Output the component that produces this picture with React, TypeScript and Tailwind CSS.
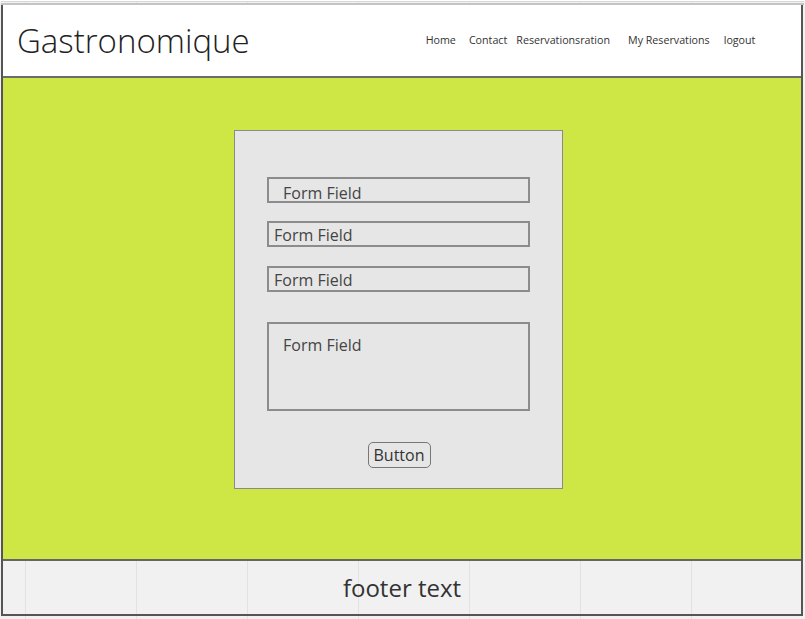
import React from 'react'

const navItems = [
  { label: 'Home', cls: 'ml-0' },
  { label: 'Contact', cls: 'ml-[13px]' },
  { label: 'Reservationsration', cls: 'ml-[9px]' },
  { label: 'My Reservations', cls: 'ml-[18px]' },
  { label: 'logout', cls: 'ml-[14px]' },
]

const Field: React.FC<{ label: string; indent?: boolean }> = ({ label, indent }) => (
  <div
    className={`h-[26px] w-[263px] border-2 border-[#8c8c8c] bg-[#e6e6e6] text-[16px] leading-[24px] text-[#444] ${
      indent ? 'pl-[14px] pt-[2px]' : 'pl-[5px]'
    }`}
  >
    {label}
  </div>
)

export default function App() {
  return (
    <div
      className="min-h-[619px] w-[805px] bg-[#f1f1f1] bg-[repeating-linear-gradient(to_right,transparent_0,transparent_110px,#e2e2e2_110px,#e2e2e2_111px)] [background-position:-85px_0] font-['Open_Sans',sans-serif]"
    >
      <div className="h-[4px] border-t border-b-2 border-t-[#d8d8d8] border-b-[#c4c4c4] mt-[1px] mx-[1px]" />
      <div className="ml-[1px] w-[802px] border-x-2 border-b-2 border-[#555]">
        <header className="flex h-[73px] items-center border-b-2 border-[#6b6b6b] bg-white">
          <h1 className="ml-[14px] text-[33px] font-light leading-none text-[#222]">
            Gastronomique
          </h1>
          <nav className="ml-[176px] flex items-center text-[10.7px] text-[#333]">
            {navItems.map((n) => (
              <span key={n.label} className={n.cls}>
                {n.label}
              </span>
            ))}
          </nav>
        </header>
        <main className="h-[483px] border-b-2 border-[#666] bg-[#cee744] pl-[231px] pt-[52px]">
          <div className="h-[359px] w-[329px] border border-[#8a8a8a] bg-[#e6e6e6] pl-[32px] pt-[46px]">
            <div className="flex flex-col">
              <Field label="Form Field" indent />
              <div className="mt-[18px]">
                <Field label="Form Field" />
              </div>
              <div className="mt-[19px]">
                <Field label="Form Field" />
              </div>
              <div className="mt-[30px] h-[89px] w-[263px] border-2 border-[#8c8c8c] pl-[14px] pt-[9px] text-[16px] leading-[24px] text-[#444]">
                Form Field
              </div>
              <div className="mt-[31px] flex w-[263px] justify-center">
                <button className="ml-[1px] h-[26px] rounded-[5px] border border-[#777] px-[5px] text-[16px] leading-[22px] text-[#333]">
                  Button
                </button>
              </div>
            </div>
          </div>
        </main>
        <footer className="flex h-[53px] items-center justify-center text-[24px] text-[#333]">
          footer text
        </footer>
      </div>
    </div>
  )
}
